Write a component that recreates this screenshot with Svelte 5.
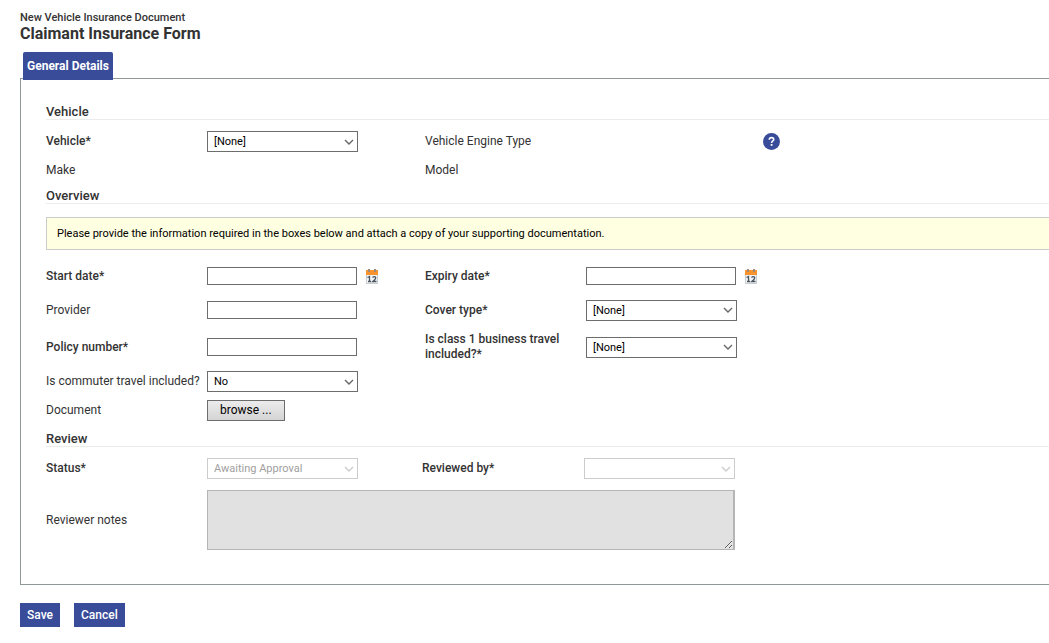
<script lang="ts">
	let vehicle = $state('');
	let startDate = $state('');
	let expiryDate = $state('');
	let provider = $state('');
	let coverType = $state('');
	let policyNumber = $state('');
	let businessTravel = $state('');
	let commuterTravel = $state('no');
	let notes = $state('');
</script>

{#snippet calendarIcon()}
	<svg width="12" height="15" viewBox="0 0 12 15" aria-hidden="true">
		<rect x="0" y="5" width="12" height="10" fill="#c9ced3" />
		<rect x="1" y="5" width="10" height="9" fill="#f1f3f5" />
		<rect x="0" y="1" width="12" height="5" fill="#f7922d" />
		<rect x="2" y="0" width="2" height="3" fill="#a08a7a" />
		<rect x="8" y="0" width="2" height="3" fill="#a08a7a" />
		<path
			d="M1.5 8.5 L3.5 7.5 V12.5 M2 12.5 H5 M6.5 8.5 Q8 7 9.5 8 Q10.5 9.5 6.8 12.5 H10.5"
			fill="none"
			stroke="#4a5560"
			stroke-width="1.3"
		/>
	</svg>
{/snippet}

<main class="page">
	<header>
		<p class="subtitle">New Vehicle Insurance Document</p>
		<h1>Claimant Insurance Form</h1>
	</header>

	<nav class="tabs">
		<a class="tab" href="#general">General Details</a>
	</nav>

	<form onsubmit={(e) => e.preventDefault()}>
		<div class="panel" id="general">
			<section>
				<h2>Vehicle</h2>
				<div class="row">
					<label class="required" for="vehicle">Vehicle*</label>
					<div class="field">
						<select id="vehicle" bind:value={vehicle}>
							<option value="">[None]</option>
						</select>
					</div>
					<span class="label">Vehicle Engine Type</span>
					<div class="field"></div>
					<button class="icon-button" type="button" aria-label="Help">
						<svg width="17" height="17" viewBox="0 0 17 17" aria-hidden="true">
							<circle cx="8.5" cy="8.5" r="8.5" fill="#384c99" />
							<path
								d="M6.3 6.7 Q6.3 4.6 8.5 4.6 Q10.7 4.6 10.7 6.4 Q10.7 7.4 9.6 8.1 Q8.6 8.8 8.6 10"
								fill="none"
								stroke="#fff"
								stroke-width="1.6"
							/>
							<rect x="7.7" y="11" width="1.8" height="1.8" fill="#fff" />
						</svg>
					</button>
				</div>
				<div class="row">
					<span class="label">Make</span>
					<div class="field"></div>
					<span class="label">Model</span>
				</div>
			</section>

			<section class="overview">
				<h2>Overview</h2>
				<p class="notice">
					Please provide the information required in the boxes below and attach a copy of your supporting documentation.
				</p>
				<div class="row medium">
					<label class="required" for="start-date">Start date*</label>
					<div class="field">
						<input id="start-date" type="text" bind:value={startDate} />
						<button class="icon-button" type="button" aria-label="Pick start date">
							{@render calendarIcon()}
						</button>
					</div>
					<label class="required" for="expiry-date">Expiry date*</label>
					<div class="field">
						<input id="expiry-date" type="text" bind:value={expiryDate} />
						<button class="icon-button" type="button" aria-label="Pick expiry date">
							{@render calendarIcon()}
						</button>
					</div>
				</div>
				<div class="row medium">
					<label for="provider">Provider</label>
					<div class="field">
						<input id="provider" type="text" bind:value={provider} />
					</div>
					<label class="required" for="cover-type">Cover type*</label>
					<div class="field">
						<select id="cover-type" bind:value={coverType}>
							<option value="">[None]</option>
						</select>
					</div>
				</div>
				<div class="row tall">
					<label class="required" for="policy-number">Policy number*</label>
					<div class="field">
						<input id="policy-number" type="text" bind:value={policyNumber} />
					</div>
					<label class="required" for="business-travel">Is class 1 business travel included?*</label>
					<div class="field">
						<select id="business-travel" bind:value={businessTravel}>
							<option value="">[None]</option>
						</select>
					</div>
				</div>
				<div class="row">
					<label for="commuter-travel">Is commuter travel included?</label>
					<div class="field">
						<select id="commuter-travel" bind:value={commuterTravel}>
							<option value="no">No</option>
							<option value="yes">Yes</option>
						</select>
					</div>
				</div>
				<div class="row">
					<span class="label" id="document-label">Document</span>
					<div class="field">
						<button class="browse" type="button" aria-describedby="document-label">browse ...</button>
					</div>
				</div>
			</section>

			<section>
				<h2>Review</h2>
				<div class="row review">
					<label class="required" for="status">Status*</label>
					<div class="field">
						<select id="status" disabled>
							<option>Awaiting Approval</option>
						</select>
					</div>
					<label class="required" for="reviewed-by">Reviewed by*</label>
					<div class="field">
						<select id="reviewed-by" disabled>
							<option></option>
						</select>
					</div>
				</div>
				<div class="row notes">
					<label for="notes">Reviewer notes</label>
					<textarea id="notes" bind:value={notes} disabled></textarea>
				</div>
			</section>
		</div>

		<div class="actions">
			<button class="primary" type="submit">Save</button>
			<button class="primary" type="button">Cancel</button>
		</div>
	</form>
</main>

<style>
	:global(body) {
		margin: 0;
		background: #fff;
		color: #333;
		font-family: Roboto, Arial, sans-serif;
		font-size: 12px;
		line-height: 15px;
	}

	.page {
		padding: 11px 0 16px 20px;
	}

	.subtitle {
		margin: 0;
		font-size: 11px;
		font-weight: 500;
		line-height: 14px;
	}

	h1 {
		margin: 0;
		font-size: 16px;
		font-weight: 700;
		line-height: 18px;
	}

	.tabs {
		display: flex;
		margin-top: 9px;
		padding-left: 3px;
	}

	.tab {
		position: relative;
		margin-bottom: -2px;
		padding: 7px 4px 6px;
		border-radius: 2px 2px 0 0;
		background: #384c99;
		color: #fff;
		font-weight: 700;
		text-decoration: none;
	}

	.panel {
		padding: 25px 0 27px 25px;
		border: 1px solid #8f9899;
		border-right: 0;
	}

	section + section {
		margin-top: 3px;
	}

	.overview {
		padding-bottom: 3px;
	}

	h2 {
		margin: 0 0 7px;
		border-bottom: 1px solid #ececec;
		font-size: 13px;
		font-weight: 500;
		line-height: 15px;
	}

	.row {
		display: grid;
		grid-template-columns: 161px 218px 161px 177px 1fr;
		align-items: center;
		min-height: 29px;
	}

	.row.medium {
		min-height: 34px;
	}

	.row.tall {
		min-height: 40px;
	}

	.row.review {
		grid-template-columns: 161px 215px 162px 1fr;
	}

	.row.notes {
		grid-template-columns: 161px 1fr;
		min-height: 74px;
	}

	.required {
		font-weight: 500;
	}

	.row > .required {
		padding-right: 20px;
	}

	.field {
		display: flex;
		align-items: center;
		gap: 9px;
	}

	input,
	select,
	textarea {
		box-sizing: border-box;
		margin: 0;
		border: 1px solid #6d6d6d;
		border-radius: 0;
		background-color: #fff;
		color: #000;
		font-family: inherit;
		font-size: 11px;
	}

	input {
		width: 150px;
		height: 18px;
		padding: 0 4px;
	}

	select {
		width: 151px;
		height: 21px;
		padding: 0 20px 0 6px;
		appearance: none;
		background-image: url("data:image/svg+xml,%3Csvg xmlns='http://www.w3.org/2000/svg' width='10' height='6'%3E%3Cpath d='M1 1l4 4 4-4' fill='none' stroke='%23666' stroke-width='1.4'/%3E%3C/svg%3E");
		background-position: right 3px center;
		background-repeat: no-repeat;
	}

	select:disabled {
		border-color: #ccc;
		background-image: url("data:image/svg+xml,%3Csvg xmlns='http://www.w3.org/2000/svg' width='10' height='6'%3E%3Cpath d='M1 1l4 4 4-4' fill='none' stroke='%23ccc' stroke-width='1.4'/%3E%3C/svg%3E");
		color: #a0a0a0;
		opacity: 1;
	}

	textarea {
		width: 528px;
		max-width: 100%;
		height: 60px;
		border-color: #b5b5b5;
		border-right-width: 2px;
		background-color: #e1e1e1;
	}

	button {
		font-family: inherit;
		font-size: 12px;
		line-height: 15px;
		cursor: pointer;
	}

	.icon-button {
		display: flex;
		justify-self: start;
		padding: 0;
		border: 0;
		background: none;
	}

	.browse {
		padding: 2px 12px;
		border: 1px solid #6d6d6d;
		border-radius: 0;
		background: linear-gradient(#ececec, #d4d4d4);
		color: #000;
	}

	.notice {
		margin: 13px 0 9px;
		padding: 8px 10px;
		border: 1px solid #ccc;
		border-right: 0;
		background: #ffffe1;
		color: #000;
		font-size: 11px;
	}

	.actions {
		display: flex;
		gap: 14px;
		margin-top: 18px;
	}

	.primary {
		padding: 5px 7px 4px;
		border: 0;
		background: #384c99;
		color: #fff;
		font-weight: 500;
	}
</style>
